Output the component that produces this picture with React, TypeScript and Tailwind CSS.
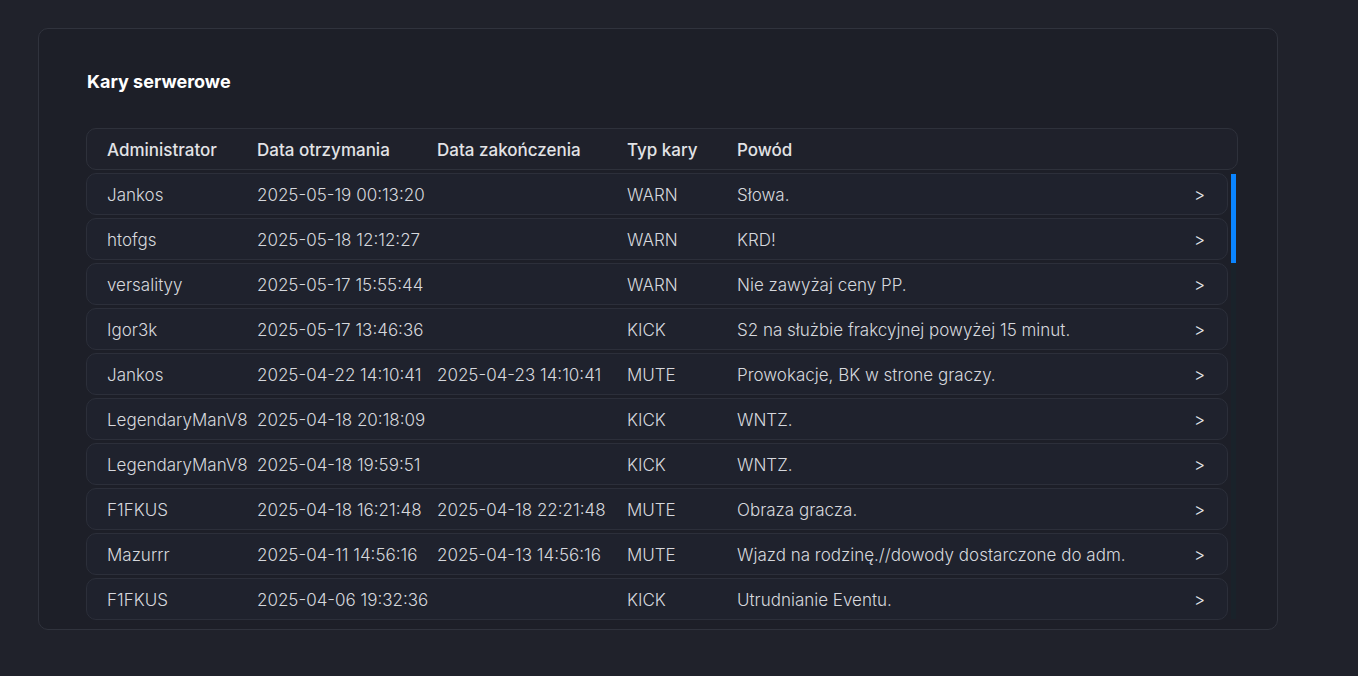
const rows = [
  ["Jankos", "2025-05-19 00:13:20", "", "WARN", "Słowa."],
  ["htofgs", "2025-05-18 12:12:27", "", "WARN", "KRD!"],
  ["versalityy", "2025-05-17 15:55:44", "", "WARN", "Nie zawyżaj ceny PP."],
  ["Igor3k", "2025-05-17 13:46:36", "", "KICK", "S2 na służbie frakcyjnej powyżej 15 minut."],
  ["Jankos", "2025-04-22 14:10:41", "2025-04-23 14:10:41", "MUTE", "Prowokacje, BK w strone graczy."],
  ["LegendaryManV8", "2025-04-18 20:18:09", "", "KICK", "WNTZ."],
  ["LegendaryManV8", "2025-04-18 19:59:51", "", "KICK", "WNTZ."],
  ["F1FKUS", "2025-04-18 16:21:48", "2025-04-18 22:21:48", "MUTE", "Obraza gracza."],
  ["Mazurrr", "2025-04-11 14:56:16", "2025-04-13 14:56:16", "MUTE", "Wjazd na rodzinę.//dowody dostarczone do adm."],
  ["F1FKUS", "2025-04-06 19:32:36", "", "KICK", "Utrudnianie Eventu."],
];

export default function App() {
  return (
    <div
      className="min-h-screen bg-[#20222b] pt-7 pl-[38px]"
      style={{ fontFamily: "Inter, 'Noto Sans', sans-serif" }}
    >
      <div className="w-[1240px] h-[602px] rounded-[10px] border border-[#30333d] bg-[#1d1f28] pl-[47px] pr-[39px] pt-[41px] pb-[9px] flex flex-col">
        {/* Title */}
        <h2 className="ml-px text-[18px] leading-6 font-bold text-white">Kary serwerowe</h2>

        {/* Header */}
        <div className="mt-[34px] h-[42px] rounded-[10px] border border-[#2e313b] bg-[#1f212b] flex items-center pl-5 pt-1 text-[17px] font-medium text-[#e2e3e6]">
          <div className="w-[150px]">Administrator</div>
          <div className="w-[180px]">Data otrzymania</div>
          <div className="w-[190px]">Data zakończenia</div>
          <div className="w-[110px]">Typ kary</div>
          <div>Powód</div>
        </div>

        {/* Body */}
        <div className="mt-[3px] flex flex-1 min-h-0">
          <div className="flex-1 flex flex-col gap-[3px] overflow-hidden">
            {rows.map((r, i) => (
              <div
                key={i}
                className="h-[42px] shrink-0 rounded-[10px] border border-[#2c2f3a] bg-[#1f222d] flex items-center pl-5 pr-[22px] pt-1 text-[17px] font-light text-[#d6d8dd]"
              >
                <div className="w-[150px] whitespace-nowrap">{r[0]}</div>
                <div className="w-[180px] whitespace-nowrap">{r[1]}</div>
                <div className="w-[190px] whitespace-nowrap">{r[2]}</div>
                <div className="w-[110px]">{r[3]}</div>
                <div className="flex-1">{r[4]}</div>
                <div className="text-[#e4e5e9]">&gt;</div>
              </div>
            ))}
          </div>
          {/* Scrollbar */}
          <div className="w-[10px] flex justify-end pr-[2px]">
            <div className="w-[5px] h-[446px] bg-[#19222a] flex flex-col">
              <div className="mt-px h-[89px] bg-[#0a84ff]" />
            </div>
          </div>
        </div>
      </div>
    </div>
  );
}
